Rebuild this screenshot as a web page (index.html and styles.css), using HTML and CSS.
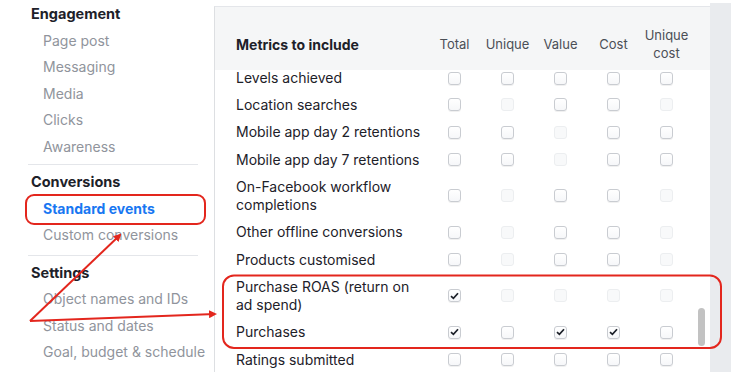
FILE: index.html
```html
<!DOCTYPE html>
<html>
<head><title>Metrics</title>
  <link rel="stylesheet" href="styles.css">
</head>
<body>
  <div class="page">
    <div class="sidebar">
      <div class="section">
        <div class="heading">Engagement</div>
        <div class="item">Page post</div>
        <div class="item">Messaging</div>
        <div class="item">Media</div>
        <div class="item">Clicks</div>
        <div class="item">Awareness</div>
      </div>
      <div class="sep"></div>
      <div class="section">
        <div class="heading">Conversions</div>
        <div class="item active">Standard events</div>
        <div class="item">Custom conversions</div>
      </div>
      <div class="sep lower"></div>
      <div class="section">
        <div class="heading">Settings</div>
        <div class="item">Object names and IDs</div>
        <div class="item">Status and dates</div>
        <div class="item">Goal, budget &amp; schedule</div>
      </div>
    </div>

    <div class="panel">
      <div class="thead">
        <div class="title">Metrics to include</div>
        <div class="col">Total</div>
        <div class="col">Unique</div>
        <div class="col">Value</div>
        <div class="col">Cost</div>
        <div class="col">Unique<br>cost</div>
      </div>
      <div class="tbody">
        <div class="rows" id="rows"></div>
      </div>
      <div class="thumb"></div>
    </div>
    <div class="track"></div>
  </div>

  <svg class="notes" width="742" height="372" viewBox="0 0 742 372">
    <defs>
      <marker id="head" markerWidth="8" markerHeight="8" refX="6" refY="4" orient="auto" markerUnits="userSpaceOnUse">
        <path d="M0,0 L8,4 L0,8 z" fill="#e3261d"/>
      </marker>
    </defs>
    <rect x="26" y="195" width="179" height="29" rx="8" fill="none" stroke="#e3261d" stroke-width="2"/>
    <rect x="223" y="275.5" width="498" height="72.5" rx="11" fill="none" stroke="#e3261d" stroke-width="2"/>
    <line x1="30" y1="321" x2="120" y2="235" stroke="#e3261d" stroke-width="2" marker-end="url(#head)"/>
    <line x1="30" y1="321" x2="215" y2="314" stroke="#e3261d" stroke-width="2" marker-end="url(#head)"/>
  </svg>

  <script>
    // 0 = empty, 1 = disabled, 2 = checked
    const metrics = [
      ["Levels achieved", [0, 0, 0, 0, 0]],
      ["Location searches", [0, 1, 0, 0, 1]],
      ["Mobile app day 2 retentions", [0, 0, 1, 0, 0]],
      ["Mobile app day 7 retentions", [0, 0, 1, 0, 0]],
      ["On-Facebook workflow completions", [0, 1, 0, 0, 1]],
      ["Other offline conversions", [0, 1, 0, 0, 1]],
      ["Products customised", [0, 1, 0, 0, 1]],
      ["Purchase ROAS (return on ad spend)", [2, 1, 1, 1, 1]],
      ["Purchases", [2, 0, 2, 2, 0]],
      ["Ratings submitted", [0, 0, 0, 0, 0]]
    ];

    const tick = '<svg width="9" height="8" viewBox="0 0 9 8"><path d="M1 4.2 L3.4 6.4 L8 1.2" fill="none" stroke="#1d2129" stroke-width="1.7"/></svg>';
    const rows = document.getElementById("rows");

    metrics.forEach(function (m) {
      let html = '<div class="name">' + m[0] + '</div>';
      m[1].forEach(function (s) {
        const cls = s === 1 ? "cb off" : "cb";
        html += '<div class="cell"><span class="' + cls + '">' + (s === 2 ? tick : "") + '</span></div>';
      });
      const row = document.createElement("div");
      row.className = "row";
      row.innerHTML = html;
      rows.appendChild(row);
    });
  </script>
</body>
</html>
```

FILE: styles.css
```css
body {
  margin: 0;
  background: white;
  font-family: Inter, Roboto, "Liberation Sans", sans-serif;
  color: #1d2129;
  overflow: hidden;
}
.page {
  display: flex;
  width: 742px;
  height: 372px;
}
.sidebar {
  width: 214px;
  flex: none;
  box-sizing: border-box;
  padding: 1px 16px 0 28px;
}
.heading {
  height: 26.5px;
  line-height: 26.5px;
  padding-left: 3px;
  font-size: 14.5px;
  font-weight: 700;
}
.item {
  height: 26.5px;
  line-height: 26.5px;
  padding-left: 15px;
  font-size: 14px;
  color: #90949c;
  white-space: nowrap;
}
.item.active {
  color: #1877f2;
  font-weight: 700;
}
.sep {
  height: 1px;
  background: #e4e6ea;
  margin: 4px 0;
}
.sep.lower {
  margin: 6px 0 4px;
}
.panel {
  position: relative;
  width: 495px;
  flex: none;
  margin-top: 6px;
  border-top: 1px solid #e4e6ea;
  border-left: 1px solid #dddfe2;
  display: flex;
  flex-direction: column;
}
.thead, .row {
  display: grid;
  grid-template-columns: 192px repeat(5, 53px);
  padding-left: 21px;
  align-items: center;
}
.thead {
  height: 63px;
  box-sizing: border-box;
  padding-top: 11px;
  background: #f5f6f7;
}
.title {
  font-size: 14px;
  font-weight: 700;
}
.col {
  text-align: center;
  font-size: 13px;
  line-height: 18px;
  color: #4b4f56;
}
.tbody {
  flex: 1;
  overflow: hidden;
}
.name {
  font-size: 14px;
  line-height: 17.5px;
  padding: 5px 0;
}
.row:first-child {
  align-items: start;
}
.row:first-child .name {
  line-height: 15.5px;
  padding: 0 0 5.25px;
}
.row:first-child .cell {
  padding-top: 1.5px;
}
.cell {
  display: flex;
  justify-content: center;
}
.cb {
  width: 13px;
  height: 13px;
  box-sizing: border-box;
  border: 1px solid #c9ccd1;
  border-radius: 3px;
  background: linear-gradient(#ffffff, #f6f7f9);
  box-shadow: 0 1px 0 rgba(0, 0, 0, 0.06);
  display: flex;
  align-items: center;
  justify-content: center;
}
.cb.off {
  border-color: #eceef0;
  background: #f8f9fa;
  box-shadow: none;
}
.thumb {
  position: absolute;
  left: 483px;
  top: 301px;
  width: 7px;
  height: 38px;
  border-radius: 4px;
  background: #c2c2c2;
}
.track {
  width: 21px;
  flex: none;
  margin-top: 3px;
  background: #e9ebee;
}
.notes {
  position: absolute;
  left: 0;
  top: 0;
  pointer-events: none;
}
```
